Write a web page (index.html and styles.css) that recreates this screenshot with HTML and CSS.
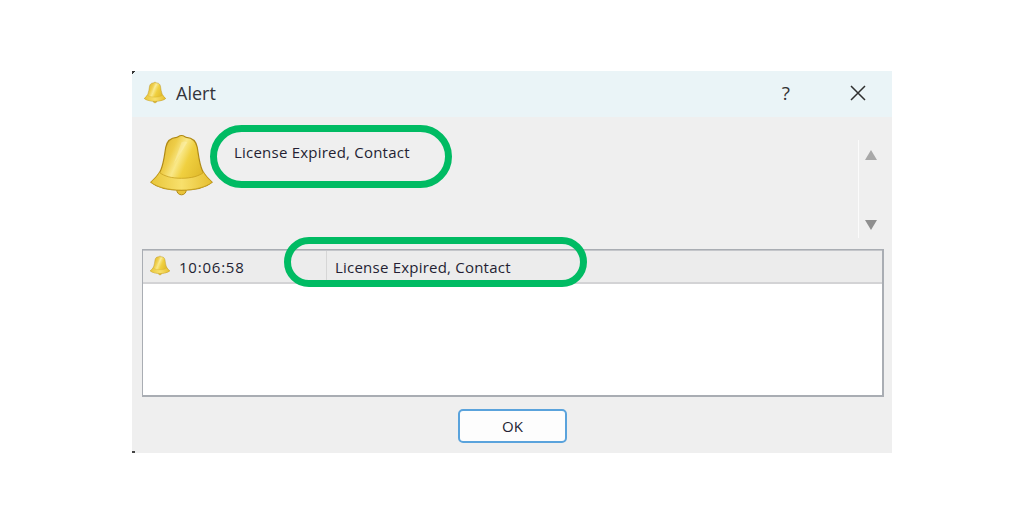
FILE: index.html
```html
<!DOCTYPE html>
<html lang="en">
<head>
<meta charset="utf-8">
<title>Alert</title>
<link rel="stylesheet" href="styles.css">
</head>
<body>
<svg class="defs" width="0" height="0" aria-hidden="true">
  <defs>
    <linearGradient id="bellFill" x1="0" y1="0.1" x2="1" y2="0.5">
      <stop offset="0" stop-color="#d4a820"/>
      <stop offset="0.36" stop-color="#eecd48"/>
      <stop offset="0.5" stop-color="#f9e888"/>
      <stop offset="0.64" stop-color="#f0d040"/>
      <stop offset="1" stop-color="#dcb426"/>
    </linearGradient>
    <linearGradient id="bellRim" x1="0" y1="0" x2="1" y2="0">
      <stop offset="0" stop-color="#e8c63a"/>
      <stop offset="0.5" stop-color="#f8e06c"/>
      <stop offset="1" stop-color="#e6bf30"/>
    </linearGradient>
    <symbol id="bell" viewBox="0 0 64 62">
      <circle cx="32" cy="56.500" r="4.800" fill="#e9c338" stroke="#b08a16" stroke-width="1"/>
      <path d="M32 1c2.500 0 3.500 1.500 5 2 7 .5 10 5 11 10 1.500 9 2 16 5 23 2 5 6.500 9 10 12.500-6 5-18 8-31 8S7 53.500 1 48.500C4.500 45 9 41 11 36c3-7 3.500-14 5-23 1-5 4-9.500 11-10 1.500-.5 2.500-2 5-2z" fill="url(#bellFill)" stroke="#b08a16" stroke-width="1.200"/>
      <path d="M9.500 38.500c5 4 13 6 22.500 6s17.500-2 22.500-6c2 4 5.500 7 8.500 10-6 5-18 8-31 8S7 53.500 1 48.500c3-3 6.500-6 8.500-10z" fill="url(#bellRim)" stroke="#c79f1e" stroke-width=".8"/>
      <path d="M24 30l8-22c2-1 4-1 6 0z" fill="#fff8cc" opacity=".3"/>
    </symbol>
  </defs>
</svg>
<main class="window">
  <header class="titlebar">
    <svg class="title-bell"><use href="#bell"/></svg>
    <span class="title-text">Alert</span>
    <span class="help">?</span>
    <svg class="close" viewBox="0 0 16 16"><path d="M1 1l14 14M15 1L1 15"/></svg>
  </header>
  <section class="message">
    <svg class="big-bell"><use href="#bell"/></svg>
    <p class="message-text">License Expired, Contact</p>
    <div class="scroller">
      <span class="arrow arrow-up"></span>
      <span class="arrow arrow-down"></span>
    </div>
    <span class="oval oval-top"></span>
  </section>
  <section class="list">
    <div class="row">
      <div class="cell-time">
        <svg class="row-bell"><use href="#bell"/></svg>
        <span class="time">10:06:58</span>
      </div>
      <div class="cell-text">License Expired, Contact</div>
    </div>
    <span class="oval oval-row"></span>
  </section>
  <footer class="actions">
    <button class="ok" type="button">OK</button>
  </footer>
</main>
</body>
</html>
```

FILE: styles.css
```css
* { box-sizing: border-box; }
html, body { margin: 0; height: 100%; background: #fff; overflow: hidden; }
body {
  padding: 71px 0 0 132px;
  font-family: "Open Sans", "Noto Sans", sans-serif;
  color: #241f33;
}
.defs { position: absolute; }
.window {
  position: relative;
  width: 760px;
  height: 382px;
  background: #efefef;
  display: flex;
  flex-direction: column;
}
.window::before {
  content: "";
  position: absolute;
  left: 0;
  top: 0;
  width: 4px;
  height: 3px;
  background: linear-gradient(135deg, #333 50%, transparent 50%);
}
.window::after {
  content: "";
  position: absolute;
  left: 0;
  bottom: 0;
  width: 3px;
  height: 2px;
  background: #444;
}
.titlebar {
  height: 46px;
  flex: none;
  background: #eaf4f7;
  display: flex;
  align-items: center;
  padding: 0 26px 0 12px;
}
.title-bell { width: 22px; height: 23px; margin-top: -3px; }
.title-text { margin-left: 10px; font-size: 18px; margin-top: -2px; color: #33333a; }
.help { margin-left: auto; font-size: 19px; color: #333; margin-right: 60px; margin-top: -3px; }
.close { width: 16px; height: 16px; margin-top: -3px; fill: none; stroke: #2f2f2f; stroke-width: 1.500; }
.message {
  position: relative;
  height: 132px;
  flex: none;
  display: flex;
  padding: 17px 0 0 18px;
}
.big-bell { width: 63px; height: 62px; }
.message-text { margin: 8px 0 0 21px; font-size: 15px; line-height: 20px; letter-spacing: .22px; }
.scroller {
  margin: 6px 8px 0 auto;
  width: 26px;
  height: 98px;
  border-left: 1px solid #fbfbfb;
  display: flex;
  flex-direction: column;
  align-items: center;
  justify-content: space-between;
  padding: 10px 2px 8px 0;
}
.arrow { width: 0; height: 0; border-left: 6px solid transparent; border-right: 6px solid transparent; }
.arrow-up { border-bottom: 10px solid #a8a8a8; }
.arrow-down { border-top: 10px solid #8f8f8f; }
.oval {
  position: absolute;
  border: 7px solid #00bb63;
  border-radius: 32px;
  pointer-events: none;
}
.oval-top { left: 78px; top: 8px; width: 242px; height: 63px; }
.list {
  position: relative;
  margin: 0 8px 0 10px;
  height: 148px;
  flex: none;
  background: #fff;
  border: 2px solid #a9adb3;
  border-width: 1px 2px 2px 1px;
  box-shadow: inset 0 1px 0 #c4c6ca;
}
.row {
  display: flex;
  height: 33px;
  margin-top: 1px;
  background: #ececec;
  border-bottom: 2px solid #d3d3d5;
  font-size: 15px;
}
.cell-time {
  width: 184px;
  display: flex;
  align-items: center;
  padding-left: 7px;
  border-right: 1px solid #d6d6d6;
}
.time { letter-spacing: .78px; }
.row-bell { width: 20px; height: 21px; margin: -2px 9px 0 0; flex: none; }
.cell-text { padding-left: 8px; display: flex; align-items: center; letter-spacing: .22px; }
.oval-row { left: 141px; top: -13px; width: 303px; height: 50px; }
.actions {
  flex: 1;
  display: flex;
  justify-content: center;
  align-items: flex-start;
  padding: 12px 0 0 1px;
}
.ok {
  width: 109px;
  height: 34px;
  background: #fdfdfd;
  border: 2px solid #5aa3dc;
  border-radius: 5px;
  font: 15px "Open Sans", "Noto Sans", sans-serif;
  color: #241f33;
  padding: 0;
}
```
